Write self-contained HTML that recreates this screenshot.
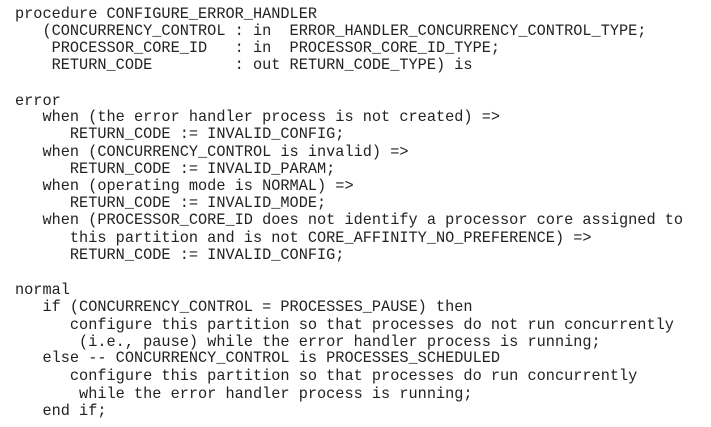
<!DOCTYPE html>
<html><head><meta charset="utf-8"><style>
html,body{margin:0;padding:0;background:#fff;width:711px;height:427px;overflow:hidden}
.l{position:absolute;left:15px;font-family:"Liberation Mono",monospace;font-size:15.25px;line-height:18px;color:#222;white-space:pre}
</style></head><body>
<div class="l" style="top:5px">procedure CONFIGURE_ERROR_HANDLER</div>
<div class="l" style="top:22px">   (CONCURRENCY_CONTROL : in  ERROR_HANDLER_CONCURRENCY_CONTROL_TYPE;</div>
<div class="l" style="top:39px">    PROCESSOR_CORE_ID   : in  PROCESSOR_CORE_ID_TYPE;</div>
<div class="l" style="top:56px">    RETURN_CODE         : out RETURN_CODE_TYPE) is</div>
<div class="l" style="top:92px">error</div>
<div class="l" style="top:108px">   when (the error handler process is not created) =&gt;</div>
<div class="l" style="top:125px">      RETURN_CODE := INVALID_CONFIG;</div>
<div class="l" style="top:143px">   when (CONCURRENCY_CONTROL is invalid) =&gt;</div>
<div class="l" style="top:160px">      RETURN_CODE := INVALID_PARAM;</div>
<div class="l" style="top:177px">   when (operating mode is NORMAL) =&gt;</div>
<div class="l" style="top:194px">      RETURN_CODE := INVALID_MODE;</div>
<div class="l" style="top:211px">   when (PROCESSOR_CORE_ID does not identify a processor core assigned to</div>
<div class="l" style="top:229px">      this partition and is not CORE_AFFINITY_NO_PREFERENCE) =&gt;</div>
<div class="l" style="top:246px">      RETURN_CODE := INVALID_CONFIG;</div>
<div class="l" style="top:281px">normal</div>
<div class="l" style="top:298px">   if (CONCURRENCY_CONTROL = PROCESSES_PAUSE) then</div>
<div class="l" style="top:316px">      configure this partition so that processes do not run concurrently</div>
<div class="l" style="top:333px">       (i.e., pause) while the error handler process is running;</div>
<div class="l" style="top:349px">   else -- CONCURRENCY_CONTROL is PROCESSES_SCHEDULED</div>
<div class="l" style="top:367px">      configure this partition so that processes do run concurrently</div>
<div class="l" style="top:385px">       while the error handler process is running;</div>
<div class="l" style="top:402px">   end if;</div>
</body></html>
